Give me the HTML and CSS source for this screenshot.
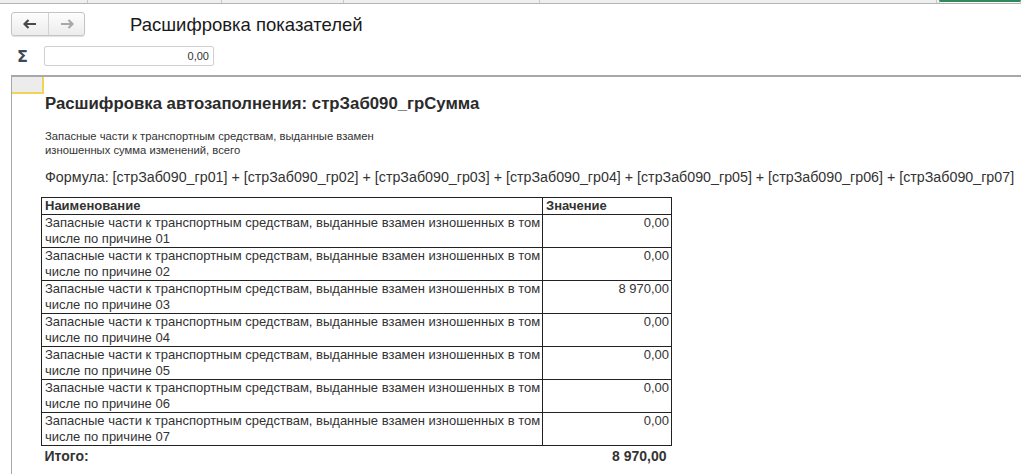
FILE: index.html
```html
<!DOCTYPE html>
<html lang="ru">
<head>
    <meta charset="UTF-8">
    <title>Расшифровка показателей</title>
    <link rel="stylesheet" href="styles.css">
</head>
<body>
    <div class="tabs">
        <div class="tab" style="width: 87px"></div>
        <div class="tab" style="width: 133px"></div>
        <div class="tab" style="width: 121px"></div>
        <div class="tab" style="width: 195px"></div>
        <div class="tab" style="width: 396px"></div>
        <div class="tab active"></div>
    </div>

    <div class="toolbar">
        <div class="nav">
            <button class="nav-btn">
                <svg width="14" height="10" viewBox="0 0 14 10"><path d="M1 5h12M5.5 1 1.5 5l4 4" fill="none" stroke="#4a4a4a" stroke-width="2.2"/></svg>
            </button>
            <button class="nav-btn">
                <svg width="14" height="10" viewBox="0 0 14 10"><path d="M1 5h12M8.5 1l4 4-4 4" fill="none" stroke="#a8a8a8" stroke-width="2.2"/></svg>
            </button>
        </div>
        <div class="page-title">Расшифровка показателей</div>
    </div>

    <div class="sum-row">
        <span class="sigma">Σ</span>
        <div class="sum-field">0,00</div>
    </div>

    <div class="report">
        <div class="corner"></div>
        <div class="report-body">
            <h1 class="report-title">Расшифровка автозаполнения: стрЗаб090_грСумма</h1>
            <p class="descr">Запасные части к транспортным средствам, выданные взамен<br>изношенных сумма изменений, всего</p>
            <p class="formula">Формула: [стрЗаб090_гр01] + [стрЗаб090_гр02] + [стрЗаб090_гр03] + [стрЗаб090_гр04] + [стрЗаб090_гр05] + [стрЗаб090_гр06] + [стрЗаб090_гр07]</p>

            <table class="grid">
                <tr>
                    <th class="col-name">Наименование</th>
                    <th class="col-value">Значение</th>
                </tr>
                <tr>
                    <td>Запасные части к транспортным средствам, выданные взамен изношенных в том числе по причине 01</td>
                    <td class="num">0,00</td>
                </tr>
                <tr>
                    <td>Запасные части к транспортным средствам, выданные взамен изношенных в том числе по причине 02</td>
                    <td class="num">0,00</td>
                </tr>
                <tr>
                    <td>Запасные части к транспортным средствам, выданные взамен изношенных в том числе по причине 03</td>
                    <td class="num">8 970,00</td>
                </tr>
                <tr>
                    <td>Запасные части к транспортным средствам, выданные взамен изношенных в том числе по причине 04</td>
                    <td class="num">0,00</td>
                </tr>
                <tr>
                    <td>Запасные части к транспортным средствам, выданные взамен изношенных в том числе по причине 05</td>
                    <td class="num">0,00</td>
                </tr>
                <tr>
                    <td>Запасные части к транспортным средствам, выданные взамен изношенных в том числе по причине 06</td>
                    <td class="num">0,00</td>
                </tr>
                <tr>
                    <td>Запасные части к транспортным средствам, выданные взамен изношенных в том числе по причине 07</td>
                    <td class="num">0,00</td>
                </tr>
                <tr class="total">
                    <td>Итого:</td>
                    <td class="num">8 970,00</td>
                </tr>
            </table>
        </div>
    </div>
</body>
</html>
```

FILE: styles.css
```css
body {
    margin: 0;
    font-family: 'Liberation Sans', Arial, sans-serif;
    color: #333;
    background: #fff;
    overflow: hidden;
}
.tabs {
    display: flex;
    height: 3px;
    background: #efefef;
    border-bottom: 1px solid #b4b4b4;
}
.tab {
    border-right: 1px solid #c8c8c8;
    flex: none;
}
.tab.active {
    flex: 1;
    margin-left: 2px;
    border-left: 1px solid #c8c8c8;
    border-top: 2px solid #2e8a5a;
    background: #fff;
}
.toolbar {
    display: flex;
    align-items: center;
    padding: 8px 0 0 11px;
}
.nav {
    display: flex;
    height: 22px;
    border: 1px solid #c4c4c4;
    border-radius: 3px;
    background: linear-gradient(#fdfdfd, #ececec);
    box-shadow: 0 1px 1px rgba(0,0,0,0.12);
}
.nav-btn {
    width: 36px;
    padding: 0;
    border: none;
    background: none;
    display: flex;
    align-items: center;
    justify-content: center;
}
.nav-btn + .nav-btn {
    border-left: 1px solid #d2d2d2;
}
.page-title {
    margin-left: 45px;
    font-size: 18.5px;
    color: #1a1a1a;
    margin-top: 2px;
}
.sum-row {
    display: flex;
    align-items: center;
    padding: 10px 0 0 17px;
    height: 20px;
}
.sigma {
    width: 27px;
    font-size: 16px;
    font-weight: bold;
    color: #3a4a5a;
    font-family: 'DejaVu Sans', sans-serif;
}
.sum-field {
    width: 164px;
    height: 18px;
    line-height: 18px;
    padding-right: 4px;
    border: 1px solid #d0d0d0;
    border-radius: 2px;
    text-align: right;
    font-size: 11px;
    color: #333;
}
.report {
    margin: 9px 0 0 11px;
    border-top: 2px solid #a8a8a8;
    border-left: 1px solid #a8a8a8;
    height: 400px;
}
.corner {
    width: 30px;
    height: 15px;
    background: #ececec;
    border-right: 2px solid #f2d35a;
    border-bottom: 2px solid #f2d35a;
}
.report-body {
    padding: 0 0 0 29px;
}
.report-title {
    margin: 0 0 0 4px;
    font-size: 16.75px;
    font-weight: bold;
    color: #2b2b2b;
    line-height: 19px;
}
.descr {
    margin: 16px 0 0 4px;
    font-size: 11.25px;
    line-height: 14px;
    color: #333;
}
.formula {
    margin: 12px 0 0 4px;
    font-size: 14.25px;
    line-height: 16px;
    white-space: nowrap;
}
.grid {
    margin-top: 12px;
    border-collapse: collapse;
    font-size: 13px;
    line-height: 16px;
    color: #333;
}
.grid th,
.grid td {
    border: 1px solid #222;
    padding: 0 1px 0 3px;
    vertical-align: top;
    text-align: left;
}
.grid th {
    font-weight: bold;
}
.col-name {
    width: 496px;
}
.col-value {
    width: 124px;
}
.grid td {
    height: 32px;
}
.grid td.num {
    text-align: right;
    padding-right: 2px;
}
.grid .total td {
    height: auto;
    border: none;
    font-weight: bold;
    font-size: 14px;
    padding-top: 2px;
}
.grid .total td.num {
    padding-right: 5px;
}
```
